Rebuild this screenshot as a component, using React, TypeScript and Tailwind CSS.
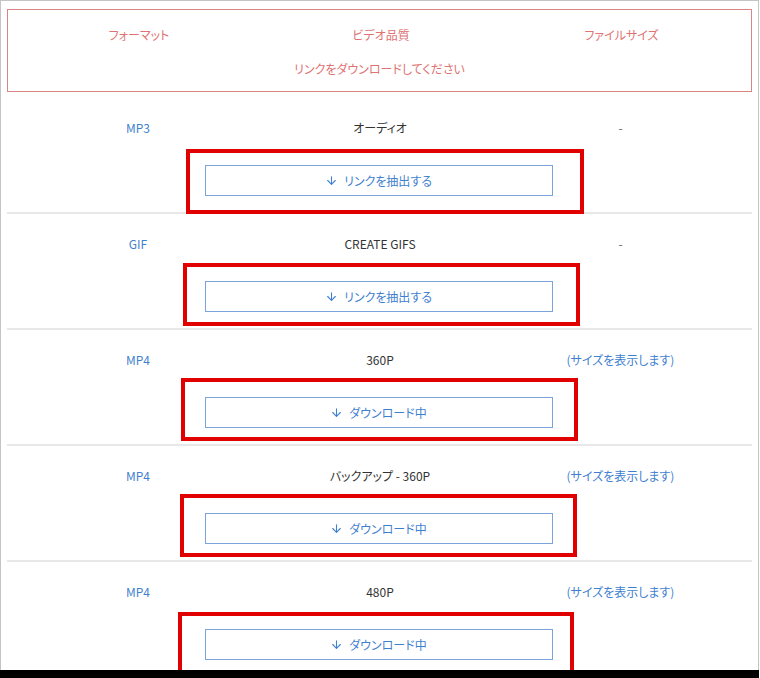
import { ArrowDown } from "lucide-react";

type Row = {
  format: string;
  quality: string;
  size: string;
  sizeLink: boolean;
  label: string;
  mark: string;
};

const rows: Row[] = [
  { format: "MP3", quality: "オーディオ", size: "-", sizeLink: false, label: "リンクを抽出する", mark: "left-[-19px] right-[-31px] top-[-16px] bottom-[-18px]" },
  { format: "GIF", quality: "CREATE GIFS", size: "-", sizeLink: false, label: "リンクを抽出する", mark: "left-[-22px] right-[-27px] top-[-18px] bottom-[-14px]" },
  { format: "MP4", quality: "360P", size: "(サイズを表示します)", sizeLink: true, label: "ダウンロード中", mark: "left-[-24px] right-[-25px] top-[-19px] bottom-[-13px]" },
  { format: "MP4", quality: "バックアップ - 360P", size: "(サイズを表示します)", sizeLink: true, label: "ダウンロード中", mark: "left-[-25px] right-[-24px] top-[-19px] bottom-[-13px]" },
  { format: "MP4", quality: "480P", size: "(サイズを表示します)", sizeLink: true, label: "ダウンロード中", mark: "left-[-27px] right-[-21px] top-[-17px] bottom-[-14px]" },
];

const font = "font-['Noto_Sans_CJK_JP','Noto_Sans',sans-serif] [font-feature-settings:'palt']";

function ResultRow({ row }: { row: Row }) {
  return (
    <div className="border-b-2 border-[#e8e8e8] pt-[21px] pb-[16px]">
      <div className="grid h-[18px] grid-cols-[262px_222px_259px] items-center text-[12px] leading-[18px]">
        <span className="text-center text-[#3f7fd0]">{row.format}</span>
        <span className="text-center text-[#333]">{row.quality}</span>
        <span className={row.sizeLink ? "text-center text-[#3f7fd0]" : "text-center text-[#666]"}>{row.size}</span>
      </div>
      <div className="mt-[28px] flex justify-center pr-[2px]">
        <div className="relative">
          <button
            type="button"
            className="flex h-[31px] w-[348px] items-center justify-center gap-[6px] border border-[#7aa3d9] bg-white text-[12px] text-[#3f7fd0]"
          >
            <ArrowDown size={13} strokeWidth={2} />
            <span>{row.label}</span>
          </button>
          <div className={`pointer-events-none absolute border-[4px] border-[#e00000] ${row.mark}`} />
        </div>
      </div>
    </div>
  );
}

export default function App() {
  return (
    <div className={`h-[678px] w-[760px] overflow-hidden bg-white ${font}`}>
      <div className="h-[670px] w-[759px] overflow-hidden border-x border-t border-[#c4c4c4] px-[6px] pt-[8px]">
        <div className="h-[83px] border border-[color:#d98585] pt-[16px] text-[12px] leading-[18px] text-[#e07272]">
          <div className="grid grid-cols-[262px_222px_259px]">
            <span className="text-center">フォーマット</span>
            <span className="text-center">ビデオ品質</span>
            <span className="text-center">ファイルサイズ</span>
          </div>
          <div className="mt-[16px] text-center">リンクをダウンロードしてください</div>
        </div>
        <div className="mt-[6px]">
          {rows.map((row, i) => (
            <ResultRow key={i} row={row} />
          ))}
        </div>
      </div>
      <div className="h-[8px] w-[759px] bg-black" />
    </div>
  );
}
